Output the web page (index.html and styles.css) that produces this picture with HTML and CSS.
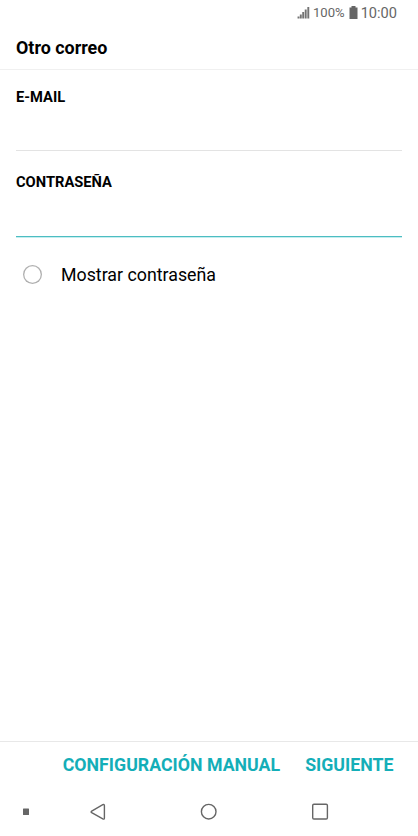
FILE: index.html
```html
<!DOCTYPE html>
<html lang="es">
<head>
<meta charset="utf-8">
<title>Otro correo</title>
<link rel="stylesheet" href="styles.css">
</head>
<body>
<div class="screen">
  <div class="status">
    <svg class="signal" width="13" height="13" viewBox="0 0 13 13"><path d="M1.500 10.500v2M3.800 8.500v4M6.200 6v6.500M8.700 3.500v9M11.300 1v11.500"/></svg>
    <span class="percent">100%</span>
    <svg class="battery" width="9" height="13" viewBox="0 0 9 13"><path d="M2.500 0h4v1.500H8.500V13H.5V1.500h2z"/></svg>
    <span class="time">10:00</span>
  </div>
  <header class="header"><h1>Otro correo</h1></header>
  <main class="form">
    <label class="field"><span>E-MAIL</span><input type="text"></label>
    <label class="field active"><span>CONTRASEÑA</span><input type="password"></label>
    <div class="option"><span class="circle"></span><span class="option-text">Mostrar contraseña</span></div>
  </main>
  <footer class="actions"><span>CONFIGURACIÓN MANUAL</span><span>SIGUIENTE</span></footer>
  <nav class="nav">
    <svg width="418" height="50" viewBox="0 0 418 50"><rect class="dot" x="23" y="21.500" width="6" height="6.500" rx=".5"/><path d="M91.700 24.100 102.800 17.600Q104.400 17 104.400 18.600V31Q104.400 32.600 102.800 31.900L91.700 25.700Q90.500 24.900 91.700 24.100z"/><circle cx="208.700" cy="24.700" r="7.300"/><rect x="312.700" y="17.300" width="14.700" height="14.700" rx="1.200"/></svg>
  </nav>
</div>
</body>
</html>
```
FILE: styles.css
```css
* { box-sizing: border-box; }
body { margin: 0; background: #fff; color: #000; font-family: Roboto, sans-serif; }
.screen { height: 836px; display: flex; flex-direction: column; overflow: hidden; }
.status { height: 25px; display: flex; align-items: center; justify-content: flex-end; padding-right: 21px; color: #666; }
.signal { fill: none; stroke: #737373; stroke-width: 1.9; }
.percent { font-size: 13.1px; margin: 0 4px 0 2.500px; }
.battery { fill: #666; }
.time { font-size: 14.6px; margin-left: 3px; }
.header { height: 45px; border-bottom: 1px solid #f0f0f0; padding: 12px 16px 0; }
h1 { margin: 0; font-size: 17.9px; line-height: 22px; font-weight: 700; }
.form { flex: 1; padding: 0 16px; }
.field { display: block; height: 81px; padding-top: 18px; border-bottom: 1px solid #e3e3e3; font-size: 14.7px; line-height: 18px; font-weight: 700; }
.field.active { height: 86px; padding-top: 22px; border-color: #4dbdc2; box-shadow: 0 1px #c5eeef; }
.field input { display: block; width: 100%; height: 38px; border: 0; outline: 0; background: none; }
.option { display: flex; align-items: center; height: 75px; padding-left: 7px; }
.circle { width: 19px; height: 19px; box-shadow: inset 0 0 0 1.3px #b0b0b0; border-radius: 50%; }
.option-text { font-size: 17.8px; margin-left: 19px; }
.actions { height: 46px; border-top: 1px solid #e8e8e8; display: flex; align-items: center; justify-content: flex-end; gap: 25px; padding-right: 24.500px; color: #14aeb8; font-size: 17.75px; font-weight: 700; }
.nav { height: 49px; }
.nav svg { display: block; fill: none; stroke: #666; stroke-width: 1.4; }
.nav .dot { fill: #666; stroke: none; }
```
